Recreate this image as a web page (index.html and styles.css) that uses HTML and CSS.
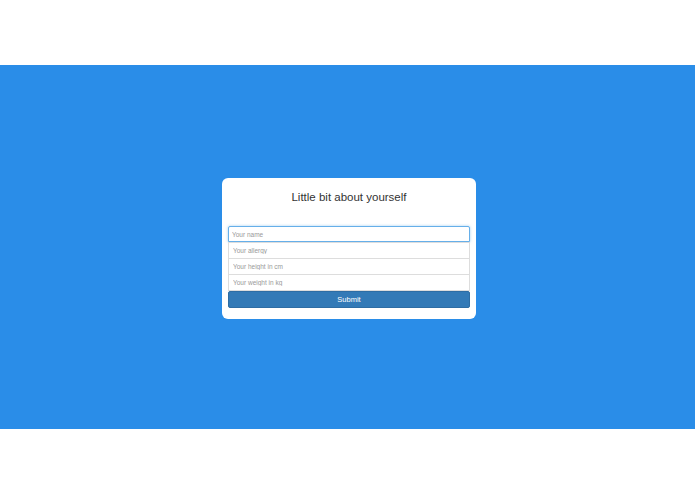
FILE: index.html
```html
<!DOCTYPE html>
<html>
<head>
<meta charset="utf-8">
<link rel="stylesheet" href="styles.css">
</head>
<body>
<div class="top"></div>
<main class="band">
  <form class="card">
    <h1 class="title">Little bit about yourself</h1>
    <div class="fields">
      <input class="field focus" type="text" placeholder="Your name">
      <input class="field" type="text" placeholder="Your allergy">
      <input class="field" type="text" placeholder="Your height in cm">
      <input class="field last" type="text" placeholder="Your weight in kg">
      <button class="submit" type="button">Submit</button>
    </div>
  </form>
</main>
</body>
</html>
```
FILE: styles.css
```css
html, body {
  margin: 0;
  padding: 0;
  background: #ffffff;
  font-family: "Liberation Sans", Arial, sans-serif;
}
.top {
  height: 65px;
}
.band {
  height: 364px;
  background: #2a8de8;
  display: flex;
  justify-content: center;
  align-items: center;
}
.card {
  width: 254px;
  box-sizing: border-box;
  height: 141px;
  margin-left: 3px;
  margin-top: 3px;
  background: #ffffff;
  border-radius: 6px;
  padding: 12px 6px 0 6px;
  display: flex;
  flex-direction: column;
}
.title {
  margin: 0;
  font-size: 11.5px;
  font-weight: normal;
  color: #333333;
  text-align: center;
  line-height: 15px;
}
.fields {
  margin-top: 21px;
  display: flex;
  flex-direction: column;
}
.field {
  height: 16px;
  box-sizing: border-box;
  margin: 0;
  border: 1px solid #dddddd;
  border-bottom: none;
  padding: 0 4px;
  font-family: "Liberation Sans", Arial, sans-serif;
  font-size: 6.5px;
  color: #555;
  background: #fff;
  outline: none;
}
.field::placeholder {
  color: #999999;
}
.field.focus {
  border: 1px solid #66afe9;
  border-radius: 2px 2px 0 0;
  box-shadow: 0 0 3px rgba(102, 175, 233, 0.6);
  padding-left: 3px;
}
.field.last {
  border-bottom: 1px solid #dddddd;
  height: 17px;
}
.submit {
  height: 17px;
  margin-top: 0;
  border: 1px solid #2e6da4;
  border-radius: 2px;
  background: #337ab7;
  color: #ffffff;
  font-family: "Liberation Sans", Arial, sans-serif;
  font-size: 7.5px;
  padding: 0;
}
```
